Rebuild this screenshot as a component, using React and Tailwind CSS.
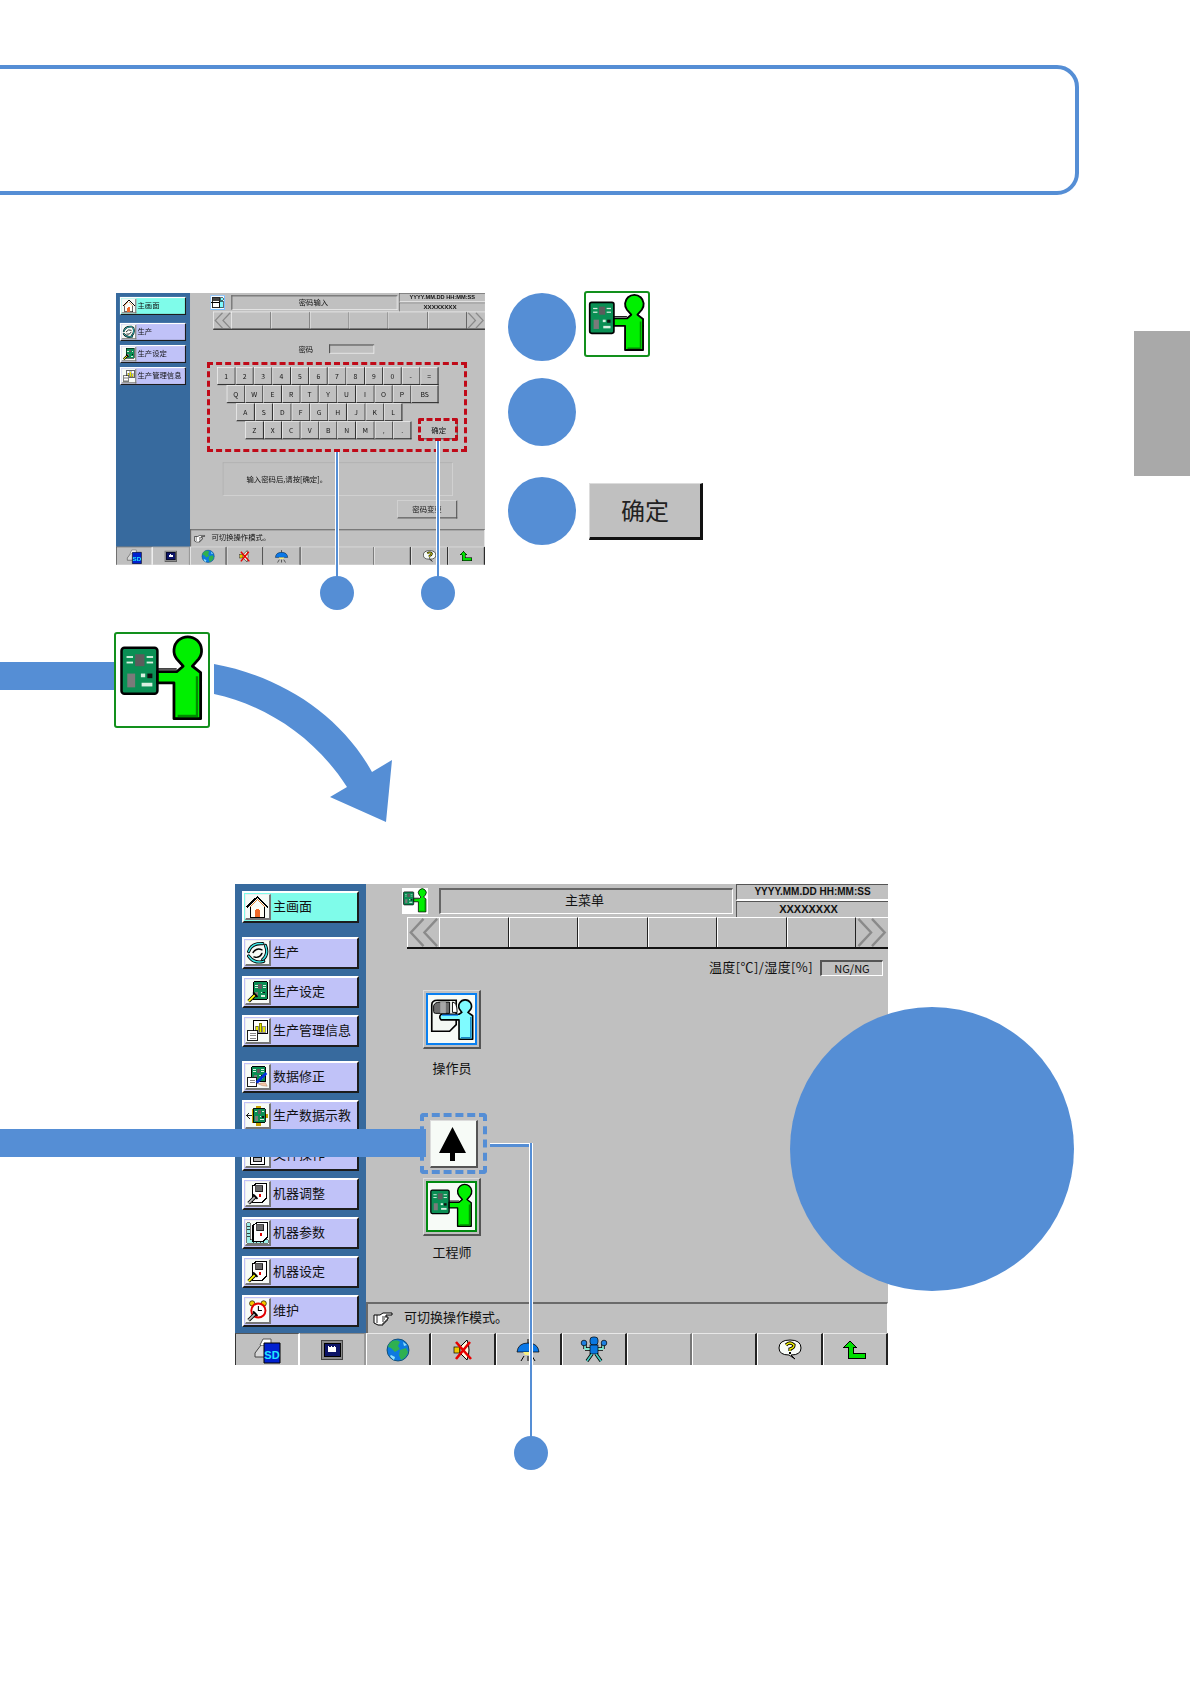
const BLUE = '#558ed5'

function Pcb({ x, y, w, h }) {
  return (
    <g>
      <rect x={x} y={y} width={w} height={h} rx={w * 0.08} fill="#0a8f54" stroke="#000" strokeWidth={w * 0.07} />
      <rect x={x + w * 0.38} y={y + h * 0.14} width={w * 0.26} height={h * 0.26} fill="#5c5c5c" />
      <rect x={x + w * 0.16} y={y + h * 0.56} width={w * 0.22} height={h * 0.3} fill="#7a7a7a" />
      <rect x={x + w * 0.54} y={y + h * 0.56} width={w * 0.12} height={h * 0.08} fill="#d8f0e0" />
      <rect x={x + w * 0.72} y={y + h * 0.56} width={w * 0.14} height={h * 0.1} fill="#111" />
      <rect x={x + w * 0.56} y={y + h * 0.76} width={w * 0.3} height={h * 0.08} fill="#d8f0e0" />
      <rect x={x + w * 0.14} y={y + h * 0.18} width={w * 0.18} height={h * 0.04} fill="#d8f0e0" />
      <rect x={x + w * 0.14} y={y + h * 0.3} width={w * 0.18} height={h * 0.04} fill="#d8f0e0" />
      <rect x={x + w * 0.7} y={y + h * 0.18} width={w * 0.18} height={h * 0.04} fill="#d8f0e0" />
      <rect x={x + w * 0.7} y={y + h * 0.3} width={w * 0.18} height={h * 0.04} fill="#d8f0e0" />
    </g>
  )
}

function EngineerArt() {
  return (
    <svg viewBox="0 0 100 100" className="h-full w-full">
      <Pcb x={6} y={15} w={39} h={50} />
      <path d="M73 35 L66 27 A15 15 0 1 1 90 27 L83 35 L92 42 V92 H63 V53 H45 V41 H66 Z" fill="#00f000" stroke="#000" strokeWidth="3" strokeLinejoin="round" />
      <path d="M88 46 V89 H67" fill="none" stroke="#008a00" strokeWidth="2.5" />
      <path d="M45 38 H66" stroke="#000" strokeWidth="1.5" />
    </svg>
  )
}

function OperatorArt() {
  return (
    <svg viewBox="0 0 100 100" className="h-full w-full">
      <path d="M8 60 V20 Q8 10 20 10 H60 V62 L46 76 H8 Z" fill="#f4f8f4" stroke="#000" strokeWidth="3.5" />
      <path d="M12 34 V22 Q14 14 26 14 H46 V38 H16 Q12 38 12 34 Z" fill="#6d6d6d" stroke="#000" strokeWidth="2" />
      <path d="M26 14 H38 V38 H26 Z" fill="#a8a8a8" />
      <path d="M52 14 Q62 14 62 36 H52 Z" fill="#fff" stroke="#000" strokeWidth="2" />
      <path d="M72 36 L67 29 A13.5 13.5 0 1 1 91 29 L85 36 L95 43 V93 H66 V52 H28 Q22 45 28 40 H66 Z" fill="#7ffbff" stroke="#000" strokeWidth="3.5" strokeLinejoin="round" />
      <path d="M91 46 V90 H70" fill="none" stroke="#1689c8" strokeWidth="3" />
      <path d="M30 42 H64" stroke="#1e90ff" strokeWidth="3" />
    </svg>
  )
}

function Tile({ children }) {
  return (
    <svg viewBox="0 0 26 26" className="h-full w-full" shapeRendering="crispEdges">
      {children}
    </svg>
  )
}

function Wrench({ color = '#ffff00' }) {
  return (
    <g shapeRendering="auto">
      <path d="M3 24 L11 16" stroke="#000" strokeWidth="4" />
      <path d="M3 24 L11 16" stroke={color} strokeWidth="2" />
      <path d="M8 14 L13 19" stroke="#000" strokeWidth="2" />
    </g>
  )
}

function MachineBox({ x = 7 }) {
  return (
    <g>
      <path d={`M${x} 5 L${x + 5} 1.5 H${x + 16} V18 L${x + 11} 23 H${x} Z`} fill="#fff" stroke="#000" strokeWidth="1.4" />
      <rect x={x + 4} y={4} width={8} height={7} fill="#6a6a6a" stroke="#000" strokeWidth="0.8" />
      <rect x={x + 8} y={14} width={2.5} height={2.5} fill="#e00000" />
    </g>
  )
}

const menuIcons = {
  home: (
    <Tile>
      <path d="M1 14 L13 2 L25 14" fill="none" stroke="#000" strokeWidth="2" />
      <path d="M4 14 L13 5 L22 14" fill="none" stroke="#e08030" strokeWidth="1.4" />
      <path d="M5 14 V25 H21 V14" fill="#fffdf4" stroke="#000" strokeWidth="1.2" />
      <path d="M10 25 V18 Q13 13 16 18 V25 Z" fill="#f06828" />
    </Tile>
  ),
  production: (
    <Tile>
      <g fill="none" strokeLinecap="round" shapeRendering="auto">
        <path d="M3 12 Q6 2 19 3" stroke="#000" strokeWidth="3.6" />
        <path d="M3 12 Q6 2 19 3" stroke="#3fe8e8" strokeWidth="1.6" />
        <path d="M22 5 Q26 15 19 21" stroke="#000" strokeWidth="3.6" />
        <path d="M22 5 Q26 15 19 21" stroke="#3fe8e8" strokeWidth="1.6" />
        <path d="M20 23 Q9 26 3 17" stroke="#000" strokeWidth="3.6" />
        <path d="M20 23 Q9 26 3 17" stroke="#3fe8e8" strokeWidth="1.6" />
        <path d="M8 13 Q12 7 18 10 M9 18 Q15 20 18 14" stroke="#000" strokeWidth="1.6" />
      </g>
    </Tile>
  ),
  setting: (
    <Tile>
      <Pcb x={8} y={2} w={16} h={20} />
      <Wrench />
    </Tile>
  ),
  info: (
    <Tile>
      <rect x="8" y="2" width="16" height="14" fill="#fff" stroke="#000" strokeWidth="1.2" />
      <rect x="11" y="8" width="3" height="7" fill="#e8e800" stroke="#000" strokeWidth="0.5" />
      <rect x="15" y="5" width="3" height="10" fill="#e8e800" stroke="#000" strokeWidth="0.5" />
      <rect x="19" y="9" width="3" height="6" fill="#e8e800" stroke="#000" strokeWidth="0.5" />
      <rect x="2" y="13" width="11" height="11" fill="#fff" stroke="#000" strokeWidth="1" />
      <path d="M4 16 H11 M4 19 H11 M4 22 H11" stroke="#777" strokeWidth="1" />
    </Tile>
  ),
  edit: (
    <Tile>
      <Pcb x={6} y={2} w={16} h={17} />
      <rect x="2" y="14" width="10" height="10" fill="#fff" stroke="#000" strokeWidth="1" />
      <path d="M4 17 H10 M4 20 H10" stroke="#777" strokeWidth="1" />
      <path d="M12 20 L23 9" stroke="#0030e0" strokeWidth="3" shapeRendering="auto" />
      <path d="M13 21 Q18 24 24 24 L22 20 Z" fill="#f6c8a8" stroke="#a07050" strokeWidth="0.5" shapeRendering="auto" />
    </Tile>
  ),
  teach: (
    <Tile>
      <path d="M7 6 H11 V2 H17 V6 H22 V11 H25 V16 H22 V22 H17 V25 H11 V22 H7 Z" fill="#c8a000" />
      <Pcb x={8} y={5} w={14} h={16} />
      <path d="M1 13 H7 M1 13 L4 10 M1 13 L4 16" stroke="#000" strokeWidth="1" fill="none" />
    </Tile>
  ),
  file: (
    <Tile>
      <rect x="5" y="2" width="16" height="22" fill="#fff" stroke="#000" strokeWidth="1.4" />
      <rect x="8" y="16" width="10" height="5" fill="#b0b0b0" stroke="#000" strokeWidth="1" />
    </Tile>
  ),
  adjust: (
    <Tile>
      <MachineBox />
      <Wrench color="#b8b8b8" />
    </Tile>
  ),
  param: (
    <Tile>
      <path d="M1 2 H5 V21 H25 V25 H1 Z" fill="#9cf0e8" stroke="#000" strokeWidth="0.6" />
      <path d="M1 6 H4 M1 10 H4 M1 14 H4 M1 18 H4 M8 25 V22 M12 25 V22 M16 25 V22 M20 25 V22" stroke="#000" strokeWidth="0.8" />
      <MachineBox x={8} />
    </Tile>
  ),
  machine: (
    <Tile>
      <MachineBox />
      <Wrench />
    </Tile>
  ),
  maintain: (
    <Tile>
      <g shapeRendering="auto">
        <circle cx="7" cy="5" r="3" fill="#f0c800" stroke="#000" strokeWidth="0.7" />
        <circle cx="20" cy="5" r="3" fill="#f0c800" stroke="#000" strokeWidth="0.7" />
        <circle cx="14" cy="13" r="8" fill="#fff" stroke="#e00000" strokeWidth="2.2" />
        <path d="M14 8 V13 H18" stroke="#000" strokeWidth="1.2" fill="none" />
      </g>
      <Wrench color="#b8b8b8" />
    </Tile>
  ),
}

function HeaderFloppy() {
  return (
    <svg viewBox="0 0 26 26" className="h-full w-full" shapeRendering="crispEdges">
      <rect x="0.5" y="0.5" width="25" height="25" fill="#f4fbff" stroke="#1e90ff" />
      <path d="M3 4 H17 V21 H3 Z" fill="#fff" stroke="#000" strokeWidth="1.5" />
      <rect x="5" y="4" width="10" height="6" fill="#444" />
      <rect x="2" y="12" width="13" height="2" fill="#000" />
      <circle cx="20" cy="7" r="3" fill="#7ffbff" stroke="#000" />
      <rect x="17" y="11" width="6" height="11" fill="#7ffbff" stroke="#000" />
    </svg>
  )
}

const toolIcons = {
  sd: (
    <svg viewBox="-2 0 28 28" className="h-[28px] w-[28px]">
      <path d="M0 17 L6 9 H16 V21 H0 Z" fill="#d8d8d8" stroke="#444" strokeWidth="1" />
      <path d="M5 9 L8 3 H16 V9" fill="#fff" stroke="#555" strokeWidth="1" />
      <path d="M9 7 H25 V27 H9 Z" fill="#0020d0" stroke="#000" strokeWidth="1" />
      <text x="17" y="23" textAnchor="middle" fontSize="11" fontWeight="700" fill="#20e8ff" fontFamily="Liberation Sans, sans-serif">SD</text>
    </svg>
  ),
  monitor: (
    <svg viewBox="0 0 22 20" className="h-[20px] w-[22px]" shapeRendering="crispEdges">
      <rect x="0.5" y="0.5" width="21" height="19" fill="#8a8a8a" stroke="#444" />
      <rect x="3" y="3" width="16" height="13" fill="#0c1468" stroke="#000" />
      <path d="M7 7 H15 V12 H7 Z" fill="#fff" />
      <path d="M7 7 H8 V6 H7 Z M10 7 H11 V6 H10 Z M13 7 H14 V6 H13 Z" fill="#fff" />
    </svg>
  ),
  globe: (
    <svg viewBox="0 0 24 24" className="h-[24px] w-[24px]">
      <circle cx="12" cy="12" r="11" fill="#0e7ae0" stroke="#064060" strokeWidth="0.8" />
      <path d="M6 3 Q12 1 14 4 L12 8 L14 11 L9 14 L5 10 L2 9 Q3 5 6 3 Z" fill="#2fb050" />
      <path d="M14 12 L20 10 L22 14 Q21 19 15 22 L13 17 Z" fill="#2fb050" />
      <path d="M17 4 L21 7 L18 8 Z" fill="#8fe0ff" />
      <path d="M5 17 L9 19 L8 22 Q5 20 4 18 Z" fill="#8fe0ff" />
    </svg>
  ),
  mute: (
    <svg viewBox="0 0 20 24" className="h-[24px] w-[20px]">
      <rect x="1" y="9" width="6" height="6" fill="#f0c800" stroke="#000" strokeWidth="0.7" />
      <path d="M7 9 L14 2 Q18 12 14 22 L7 15 Z" fill="#fff8e0" stroke="#000" strokeWidth="1" />
      <path d="M3 4 L18 21 M17 4 L3 21" stroke="#e80000" strokeWidth="2.6" />
    </svg>
  ),
  lamp: (
    <svg viewBox="0 0 26 24" className="h-[24px] w-[26px]">
      <path d="M13 1 V6" stroke="#000" strokeWidth="1" />
      <path d="M2 14 Q3 5 13 5 Q23 5 24 14 Z" fill="#0a78e8" stroke="#000" strokeWidth="0.7" />
      <path d="M8 14 H18 L16 17 H10 Z" fill="#f8f080" />
      <path d="M9 18 L6 23 M13 18 V23 M17 18 L20 23" stroke="#000" strokeWidth="1" />
    </svg>
  ),
  robot: (
    <svg viewBox="0 0 28 28" className="h-[28px] w-[28px]">
      <path d="M5 13 H23 M5 13 V8 M23 13 V8" stroke="#000" strokeWidth="3.4" fill="none" />
      <path d="M5 13 H23 M5 13 V9 M23 13 V9" stroke="#7fe8d0" strokeWidth="1.8" fill="none" />
      <circle cx="4" cy="7" r="2.8" fill="#1e80e0" stroke="#000" strokeWidth="0.7" />
      <circle cx="24" cy="7" r="2.8" fill="#1e80e0" stroke="#000" strokeWidth="0.7" />
      <rect x="10" y="1" width="8" height="8" rx="3" fill="#0a78e0" stroke="#000" strokeWidth="0.7" />
      <rect x="10" y="9" width="8" height="9" fill="#0a78e0" stroke="#000" strokeWidth="0.7" />
      <path d="M12 18 L7 25 M16 18 L21 25" stroke="#000" strokeWidth="3.4" />
      <path d="M12 18 L7 25 M16 18 L21 25" stroke="#46c8c0" strokeWidth="1.8" />
    </svg>
  ),
  help: (
    <svg viewBox="0 0 24 22" className="h-[22px] w-[24px]">
      <path d="M12 1 Q23 1 23 9 Q23 16 13 16 L17 20 L11 16 Q1 16 1 9 Q1 1 12 1 Z" fill="#f8fcf8" stroke="#000" strokeWidth="1" />
      <path d="M8 6 Q12 2 16 6 Q16 9 12 10 V12" fill="none" stroke="#000" strokeWidth="3.2" />
      <path d="M8 6 Q12 2 16 6 Q16 9 12 10 V12" fill="none" stroke="#f0f000" strokeWidth="1.4" />
      <rect x="11" y="13" width="2" height="2" fill="#000" />
    </svg>
  ),
  back: (
    <svg viewBox="0 0 24 20" className="h-[20px] w-[24px]" shapeRendering="crispEdges">
      <path d="M7 1 L13 7 H10 V13 H22 V18 H5 V7 H1 Z" fill="#00e000" stroke="#000" strokeWidth="1" />
    </svg>
  ),
}

function HandIcon() {
  return (
    <svg viewBox="0 0 20 14" className="h-[14px] w-[20px]">
      <path d="M1 3 H7 L10 1 H19 V3 H13 V5 H15 V7 H14 V9 H12 V11 H10 V13 H5 L1 11 Z" fill="#fff" stroke="#000" strokeWidth="1" strokeLinejoin="round" />
      <path d="M4 3 V11 M9 5 H13 M9 7 H12 M9 9 H11" stroke="#000" strokeWidth="0.8" fill="none" />
    </svg>
  )
}

function DoubleArrow({ flip }) {
  return (
    <svg viewBox="0 0 32 32" className={flip ? 'h-full w-full -scale-x-100' : 'h-full w-full'}>
      <path d="M16 1 L2 16 L16 31 M31 1 L17 16 L31 31" fill="none" stroke="#8a8a8a" strokeWidth="2.6" />
    </svg>
  )
}

const bottomCell = 'flex items-center justify-center border-t border-l border-t-[#e8e8e8] border-l-white border-r-2 border-r-[#222]'

// first two tool cells and the blank one have a different edge than the rest
const bottomCellAt = {
  0: 'flex items-center justify-center border-t border-l border-t-[#555] border-l-[#333] border-r-2 border-r-white',
  1: 'flex items-center justify-center border-t border-t-[#888] border-r-2 border-r-[#999]',
  6: 'flex items-center justify-center border-t border-l border-t-[#e8e8e8] border-l-white border-r-2 border-r-[#777]',
}

function SideButton({ item }) {
  return (
    <div
      className={`flex h-[32px] w-[117px] items-center gap-[2px] border-t-2 border-l-2 border-t-white border-l-white border-r-2 border-b-2 border-r-[#1c1c1c] border-b-[#1c1c1c] pl-[1px] ${item.active ? 'bg-[#7ffcea]' : 'bg-[#c0c2f8]'} ${item.gap ? 'mt-[14px]' : 'mt-[7px]'}`}
    >
      <div className="h-[26px] w-[26px] shrink-0 border-t border-l border-t-[#eee] border-l-[#eee] border-r-2 border-b-2 border-r-[#777] border-b-[#777] bg-[#f7fbf7]">
        {menuIcons[item.icon]}
      </div>
      <span className="-mt-[3px] whitespace-nowrap text-[13px] leading-none text-[#111]">{item.label}</span>
    </div>
  )
}

function Screen({ title, headerIcon, menu, tools, status, children }) {
  return (
    <div className="flex h-[481px] w-[653px] flex-col bg-[#c0c0c0] font-[family-name:'Noto_Sans_CJK_SC',sans-serif] text-[#111]">
      <div className="flex h-[449px]">
        <aside className="h-full w-[131px] shrink-0 bg-[#376a9e] pl-[7px]">
          {menu.map((item) => (
            <SideButton key={item.label} item={item} />
          ))}
        </aside>
        <main className="flex min-w-0 flex-1 flex-col">
          <div className="flex h-[33px] items-start">
            <div className="mt-[4px] ml-[36px] h-[26px] w-[26px] bg-white">{headerIcon}</div>
            <div className="mt-[4px] ml-[11px] flex h-[26px] w-[294px] items-center justify-center border-t-2 border-l-2 border-t-[#666] border-l-[#666] border-r border-b border-r-white border-b-white pb-[3px] pr-[4px] text-[13px]">
              {title}
            </div>
            <div className="ml-[3px] flex w-[152px] flex-col font-[family-name:'Liberation_Sans',sans-serif] font-bold leading-none">
              <div className="flex h-[17px] items-center justify-center border-t border-l border-t-[#555] border-l-[#555] border-b-2 border-b-white text-[10px]">YYYY.MM.DD HH:MM:SS</div>
              <div className="flex h-[16px] items-center justify-center border-l border-l-[#555] border-t border-t-[#555] pr-[8px] text-[11px]">XXXXXXXX</div>
            </div>
          </div>
          <div className="ml-[41px] flex h-[32px] border-b-2 border-b-[#111]">
            <div className="h-full w-[32px] shrink-0 border-t border-l border-t-white border-l-white"><DoubleArrow /></div>
            {[0, 1, 2, 3, 4, 5].map((n) => (
              <div key={n} className="h-full w-[69.8px] border-t border-l border-t-white border-l-white border-r border-r-[#222]" />
            ))}
            <div className="h-full w-[32px] shrink-0 border-t border-t-white"><DoubleArrow flip /></div>
          </div>
          <div className="min-h-0 flex-1">{children}</div>
          <div className="flex h-[31px] items-center gap-[11px] border-t-2 border-l-2 border-t-[#6a6a6a] border-l-[#6a6a6a] border-r border-r-white pl-[5px] text-[13px]">
            <HandIcon />
            <span className="-mt-[4px]">{status}</span>
          </div>
        </main>
      </div>
      <div className="grid h-[32px] grid-cols-10">
        {tools.map((tool, i) => (
          <div key={i} className={bottomCellAt[i] || bottomCell}>
            {tool && toolIcons[tool]}
          </div>
        ))}
      </div>
    </div>
  )
}

function RaisedButton({ className, children }) {
  return (
    <div className={`flex items-center justify-center border-t border-l border-t-[#dcdcdc] border-l-[#dcdcdc] border-r-2 border-b-2 border-r-[#555] border-b-[#555] bg-[#c0c0c0] ${className}`}>
      {children}
    </div>
  )
}

function Key({ label, wide }) {
  return (
    <div className={`flex h-[32px] shrink-0 items-center justify-center border-t border-l border-t-white border-l-white border-r-2 border-b-2 border-r-[#333] border-b-[#333] bg-[#c0c0c0] text-[12px] leading-none ${wide ? 'w-[48px]' : 'w-[32.7px]'}`}>
      {label}
    </div>
  )
}

const passwordMenu = [
  { label: '主画面', icon: 'home', active: true },
  { label: '生产', icon: 'production', gap: true },
  { label: '生产设定', icon: 'setting' },
  { label: '生产管理信息', icon: 'info' },
]

const mainMenu = [
  ...passwordMenu,
  { label: '数据修正', icon: 'edit', gap: true },
  { label: '生产数据示教', icon: 'teach' },
  { label: '文件操作', icon: 'file' },
  { label: '机器调整', icon: 'adjust' },
  { label: '机器参数', icon: 'param' },
  { label: '机器设定', icon: 'machine' },
  { label: '维护', icon: 'maintain' },
]

function PasswordBody() {
  return (
    <div className="flex flex-col">
      <div className="mt-[26px] ml-[192px] flex h-[16px] items-center text-[13px]">
        <span className="w-[54px]">密码</span>
        <div className="h-[16px] w-[80px] border-t-2 border-l-2 border-t-[#555] border-l-[#555] border-r border-b border-r-white border-b-white" />
      </div>
      <div className="mt-[24px] ml-[48px] flex flex-col">
        <div className="flex">
          {'1234567890-='.split('').map((k) => <Key key={k} label={k} />)}
        </div>
        <div className="ml-[17px] flex">
          {'QWERTYUIOP'.split('').map((k) => <Key key={k} label={k} />)}
          <Key label="BS" wide />
        </div>
        <div className="ml-[34px] flex">
          {'ASDFGHJKL'.split('').map((k) => <Key key={k} label={k} />)}
        </div>
        <div className="ml-[50px] flex h-[32px] items-end">
          {'ZXCVBNM,.'.split('').map((k) => <Key key={k} label={k} />)}
          <RaisedButton className="ml-[15px] h-[34px] w-[67px] shrink-0 text-[13px]">确定</RaisedButton>
        </div>
      </div>
      <div className="mt-[41px] ml-[58px] flex h-[59px] w-[407px] items-center border-t border-l border-t-[#a8a8a8] border-l-[#a8a8a8] border-r border-b border-r-[#dcdcdc] border-b-[#dcdcdc] pl-[41px] text-[13px]">
        输入密码后,请按[确定]。
      </div>
      <RaisedButton className="mt-[8px] ml-[367px] h-[32px] w-[106px] text-[13px]">密码变更</RaisedButton>
    </div>
  )
}

function HomeBody() {
  return (
    <div className="flex flex-col">
      <div className="mt-[11px] flex h-[16px] items-center justify-end pr-[5px] text-[13px] tracking-[0.4px]">
        <span className="-mt-[2px]">温度[℃]/湿度[%]</span>
        <div className="ml-[7px] flex h-[16px] w-[63px] items-center justify-center border-t-2 border-l-2 border-t-[#555] border-l-[#555] border-r border-b border-r-white border-b-white text-[11px] leading-none tracking-normal">NG/NG</div>
      </div>
      <div className="mt-[14px] ml-[57px] flex w-[58px] flex-col items-center">
        <RaisedButton className="h-[59px] w-[58px] p-[2px]">
          <div className="h-full w-full border-2 border-[#0a80f0] bg-[#f7fbf7]"><OperatorArt /></div>
        </RaisedButton>
        <span className="mt-[9px] h-[20px] whitespace-nowrap text-[13px] leading-[20px]">操作员</span>
        <RaisedButton className="mt-[100px] h-[58px] w-[58px] p-[2px]">
          <div className="h-full w-full border-2 border-[#008a10] bg-[#f7fbf7]"><EngineerArt /></div>
        </RaisedButton>
        <span className="mt-[6px] whitespace-nowrap text-[13px] leading-[20px]">工程师</span>
      </div>
    </div>
  )
}

function Dot() {
  return <div className="h-[34px] w-[34px] rounded-full bg-[#558ed5]" />
}

function StepDot() {
  return <div className="h-[68px] w-[68px] shrink-0 rounded-full bg-[#558ed5]" />
}

function EngineerBadge({ className }) {
  return (
    <div className={`rounded-[3px] border-2 border-[#12901c] bg-white ${className}`}>
      <EngineerArt />
    </div>
  )
}

export default function App() {
  return (
    <div className="relative min-h-[1684px] overflow-hidden bg-white">
      {/* side tab */}
      <div className="absolute top-[331px] right-0 h-[145px] w-[56px] bg-[#a9a9a9]" />

      <div className="mt-[65px] -ml-[20px] h-[130px] w-[1099px] rounded-[22px] border-4 border-[#558ed5]" />

      <section className="mt-[98px] flex h-[339px]">
        <div className="relative ml-[116px] h-[272px] w-[369px]">
          <div className="origin-top-left scale-[0.565] blur-[0.9px]">
            <Screen
              title="密码输入"
              headerIcon={<HeaderFloppy />}
              menu={passwordMenu}
              tools={['sd', 'monitor', 'globe', 'mute', 'lamp', null, null, null, 'help', 'back']}
              status="可切换操作模式。"
            >
              <PasswordBody />
            </Screen>
          </div>
          <div className="absolute top-[69px] left-[91px] h-[90px] w-[260px] border-[3px] border-dashed border-[#c00a18]" />
          <div className="absolute top-[125px] left-[302px] h-[23px] w-[40px] rounded-[2px] border-[3px] border-dashed border-[#c00a18]" />
          <div className="absolute top-[159px] left-[219px] h-[125px] w-[4px] border-x border-x-white bg-[#558ed5]" />
          <div className="absolute top-[148px] left-[320px] h-[136px] w-[4px] border-x border-x-white bg-[#558ed5]" />
          <div className="absolute top-[283px] left-[204px]"><Dot /></div>
          <div className="absolute top-[283px] left-[305px]"><Dot /></div>
        </div>

        <div className="ml-[23px] flex flex-col">
          <div className="flex">
            <StepDot />
            <EngineerBadge className="-mt-[2px] ml-[8px] h-[66px] w-[66px]" />
          </div>
          <div className="mt-[17px] flex">
            <StepDot />
          </div>
          <div className="mt-[31px] flex items-center">
            <StepDot />
            <div className="ml-[13px] flex h-[57px] w-[114px] items-center justify-center border-t border-l border-t-[#dcdcdc] border-l-[#dcdcdc] border-r-[3px] border-b-[3px] border-r-[#111] border-b-[#111] bg-[#c0c0c0] font-[family-name:'Noto_Sans_CJK_SC',sans-serif] text-[24px] text-[#222]">
              确定
            </div>
          </div>
        </div>
      </section>

      <section className="relative flex h-[252px] items-start">
        <div className="mt-[30px] h-[28px] w-[114px] bg-[#558ed5]" />
        <EngineerBadge className="h-[96px] w-[96px]" />
        <svg viewBox="0 632 420 200" className="absolute top-0 left-0 h-[200px] w-[420px]">
          <path
            d="M214 664 C280 676 340 714 372 772 L392 760 L386 822 L330 797 L347 787 C315 737 265 705 214 694 Z"
            fill={BLUE}
          />
        </svg>
      </section>

      <section className="relative ml-[235px] h-[481px] w-[653px]">
        <Screen
          title="主菜单"
          headerIcon={<EngineerArt />}
          menu={mainMenu}
          tools={['sd', 'monitor', 'globe', 'mute', 'lamp', 'robot', null, null, 'help', 'back']}
          status="可切换操作模式。"
        >
          <HomeBody />
        </Screen>

        {/* callouts over the screen */}
        <div className="absolute top-[245px] -left-[235px] h-[28px] w-[426px] bg-[#558ed5]" />
        <div className="absolute top-[229px] left-[185px] flex h-[61px] w-[67px] items-center justify-center rounded-[4px] border-4 border-dashed border-[#558ed5]">
          <RaisedButton className="h-[48px] w-[48px] bg-[#f7fbf7]">
            <svg viewBox="0 0 45 45" className="h-full w-full bg-[#f7fbf7]">
              <path d="M21.5 6 L35 32 H24 V40 H19 V32 H8 Z" fill="#000" />
            </svg>
          </RaisedButton>
        </div>
        <div className="absolute top-[259px] left-[255px] h-[4px] w-[40px] border-t border-t-white bg-[#558ed5]" />
        <div className="absolute top-[259px] left-[294px] h-[294px] w-[4px] border-x border-x-white bg-[#558ed5]" />
        <div className="absolute top-[552px] left-[279px]"><Dot /></div>
        <div className="absolute top-[123px] left-[555px] h-[284px] w-[284px] rounded-full bg-[#558ed5]" />
      </section>
    </div>
  )
}
